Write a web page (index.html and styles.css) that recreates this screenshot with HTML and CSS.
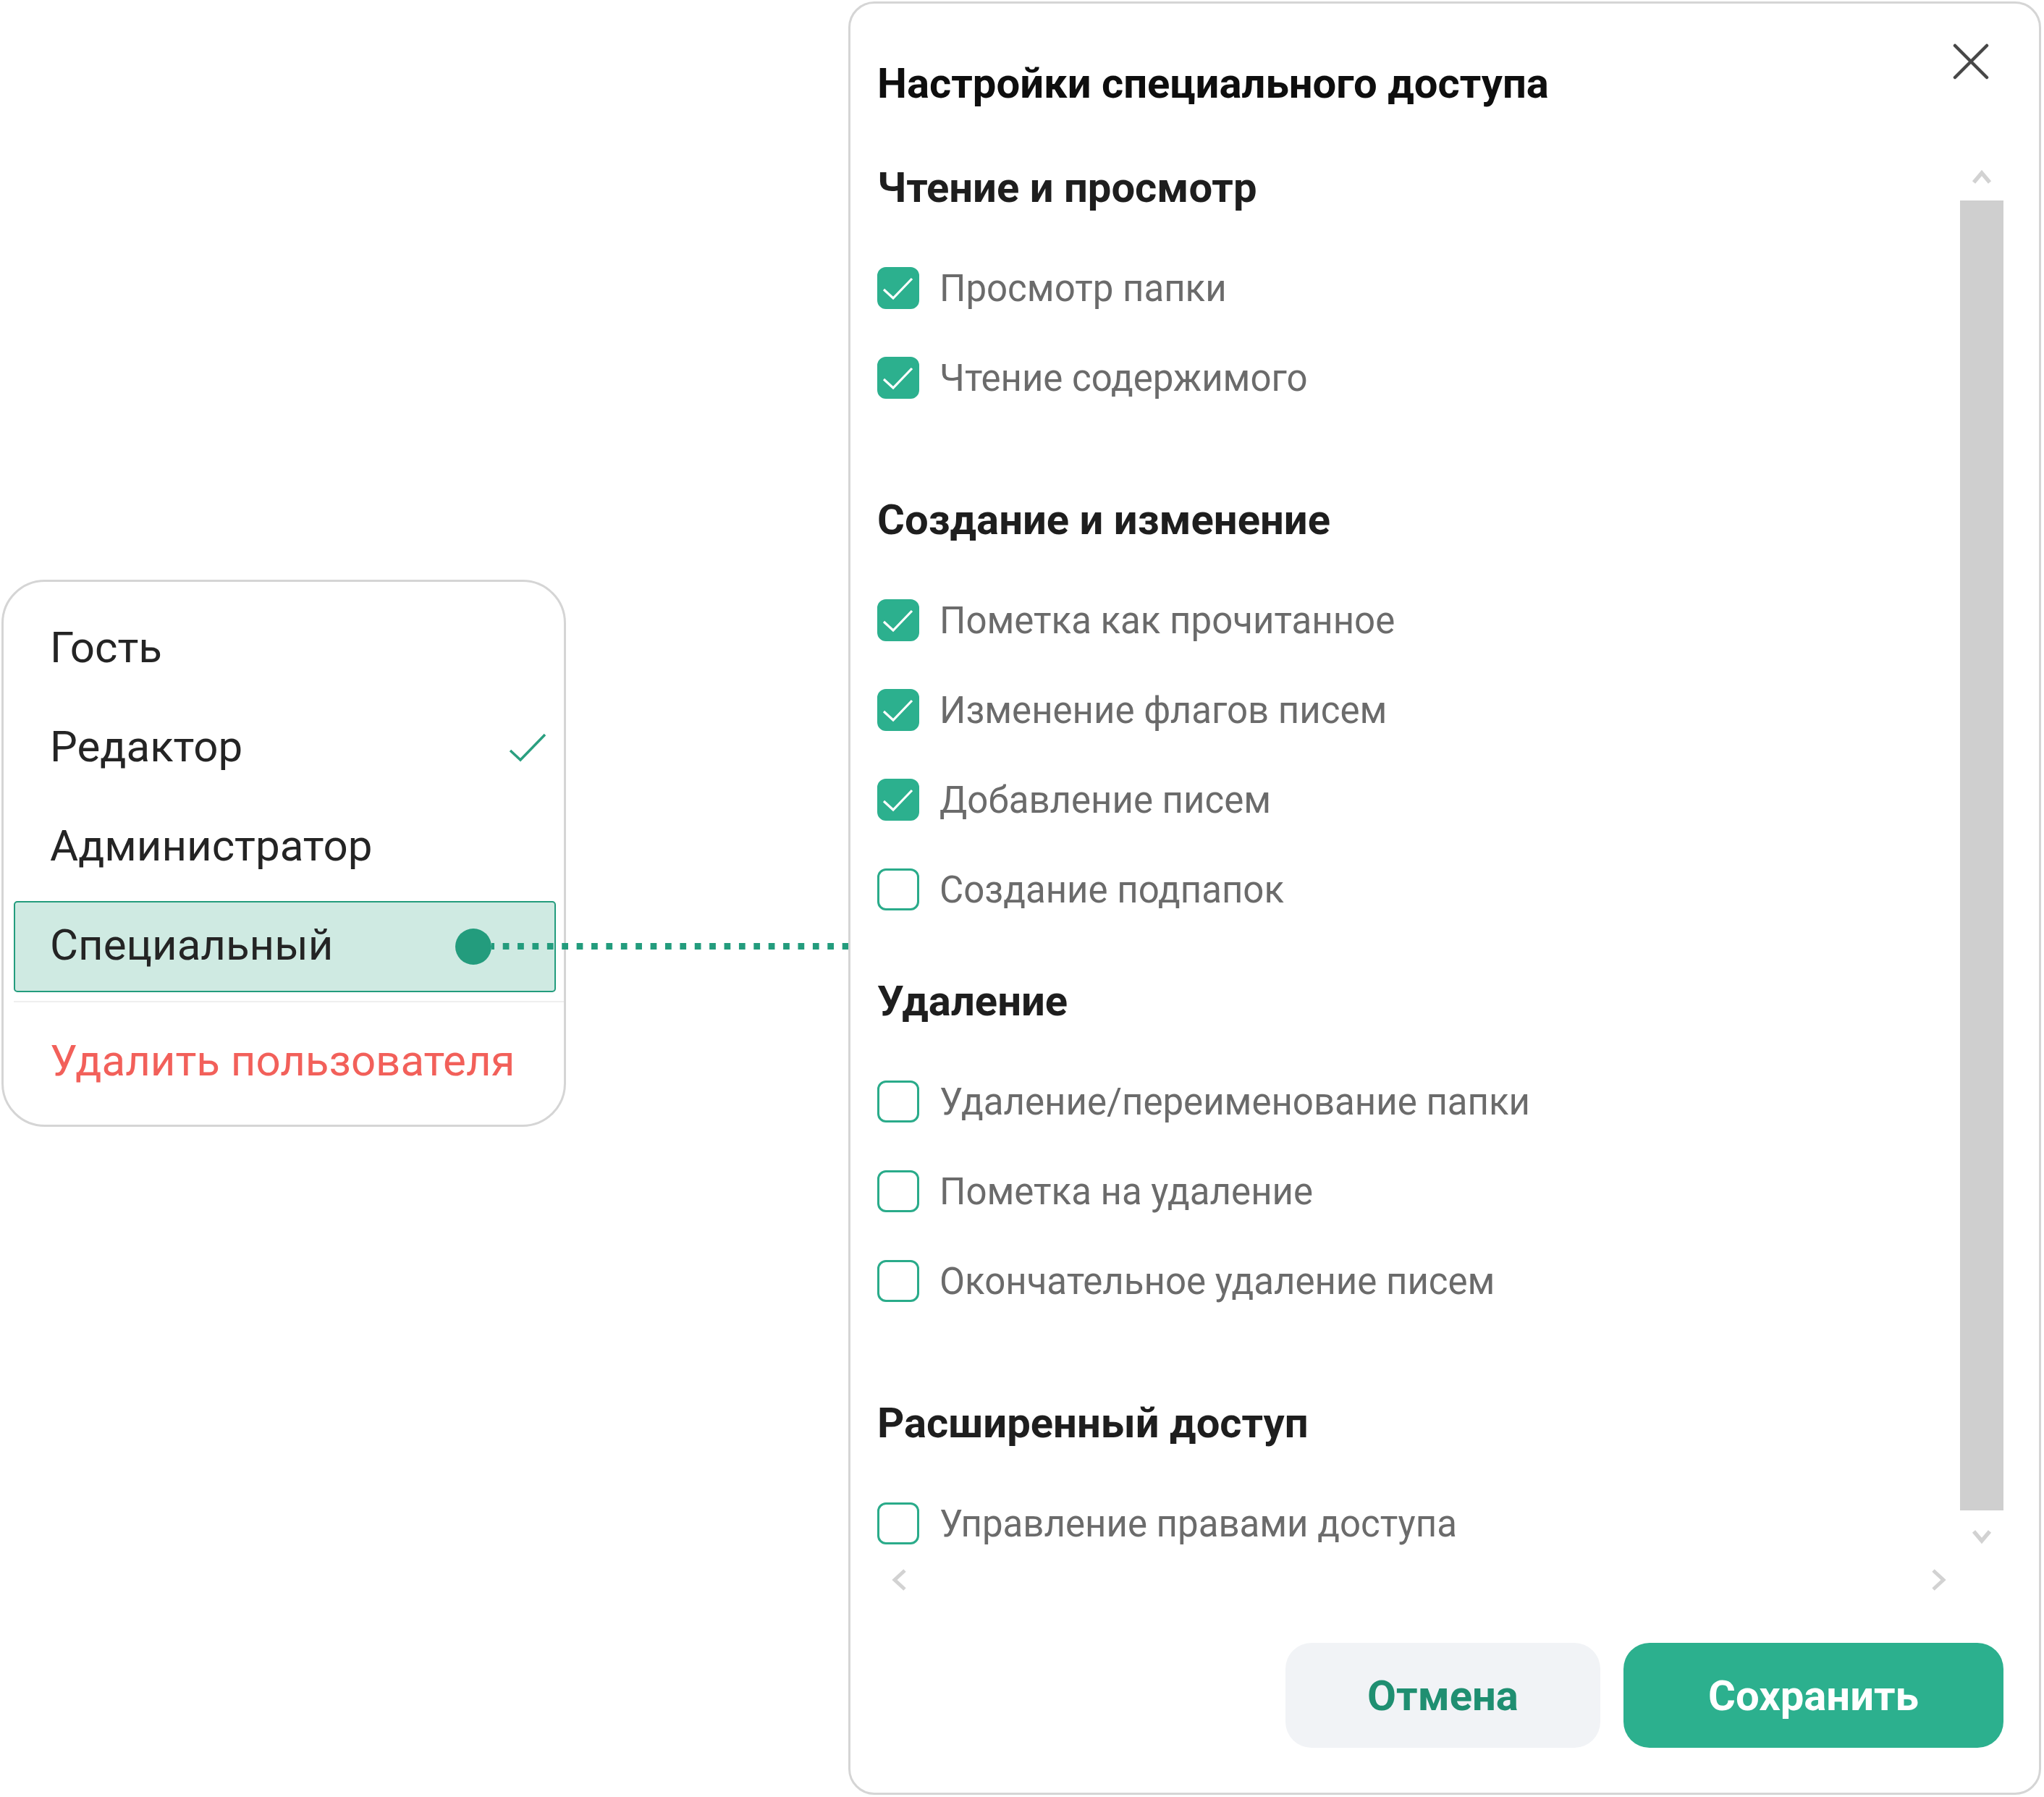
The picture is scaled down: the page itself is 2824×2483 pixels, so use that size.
FILE: index.html
```html
<!DOCTYPE html>
<html lang="ru">
<head>
  <meta charset="UTF-8">
  <title>Настройки специального доступа</title>
  <link rel="stylesheet" href="styles.css">
</head>
<body>

  <div class="stage">

    <div class="menu-col">
      <ul class="role-menu">
        <li class="role">Гость</li>
        <li class="role">Редактор
          <svg class="role-check" viewBox="0 0 52 40" width="52" height="40"><path d="M2 24 L16 37 L50 2" fill="none" stroke="#2a9f80" stroke-width="3.5"/></svg>
        </li>
        <li class="role">Администратор</li>
        <li class="role role-active">Специальный <span class="pin"></span></li>
        <li class="sep"></li>
        <li class="role role-danger">Удалить пользователя</li>
      </ul>
    </div>

    <div class="dialog">
      <div class="dialog-head">
        <h1>Настройки специального доступа</h1>
        <button class="close" title="Закрыть">
          <svg viewBox="0 0 50 50" width="50" height="50"><path d="M3 3 L47 47 M47 3 L3 47" stroke="#474747" stroke-width="4.5" stroke-linecap="round"/></svg>
        </button>
      </div>

      <div class="pane">
        <div class="pane-body">

          <section class="group">
            <h2>Чтение и просмотр</h2>
            <div class="opts">
              <label class="opt"><span class="box on"><svg viewBox="0 0 58 58"><path d="M9 31 L22 43 L48 16" fill="none" stroke="#fff" stroke-width="3.2"/></svg></span>Просмотр папки</label>
              <label class="opt"><span class="box on"><svg viewBox="0 0 58 58"><path d="M9 31 L22 43 L48 16" fill="none" stroke="#fff" stroke-width="3.2"/></svg></span>Чтение содержимого</label>
            </div>
          </section>

          <section class="group group-tight">
            <h2>Создание и изменение</h2>
            <div class="opts">
              <label class="opt"><span class="box on"><svg viewBox="0 0 58 58"><path d="M9 31 L22 43 L48 16" fill="none" stroke="#fff" stroke-width="3.2"/></svg></span>Пометка как прочитанное</label>
              <label class="opt"><span class="box on"><svg viewBox="0 0 58 58"><path d="M9 31 L22 43 L48 16" fill="none" stroke="#fff" stroke-width="3.2"/></svg></span>Изменение флагов писем</label>
              <label class="opt"><span class="box on"><svg viewBox="0 0 58 58"><path d="M9 31 L22 43 L48 16" fill="none" stroke="#fff" stroke-width="3.2"/></svg></span>Добавление писем</label>
              <label class="opt"><span class="box"></span>Создание подпапок</label>
            </div>
          </section>

          <section class="group">
            <h2>Удаление</h2>
            <div class="opts">
              <label class="opt"><span class="box"></span>Удаление/переименование папки</label>
              <label class="opt"><span class="box"></span>Пометка на удаление</label>
              <label class="opt"><span class="box"></span>Окончательное удаление писем</label>
            </div>
          </section>

          <section class="group">
            <h2>Расширенный доступ</h2>
            <div class="opts">
              <label class="opt"><span class="box"></span>Управление правами доступа</label>
            </div>
          </section>

        </div>

        <div class="vscroll">
          <div class="vs-up"><svg viewBox="0 0 30 23" width="30" height="23"><path d="M4 19 L15 6 L26 19" fill="none" stroke="#d2d2d2" stroke-width="5.5"/></svg></div>
          <div class="vs-thumb"></div>
          <div class="vs-down"><svg viewBox="0 0 30 23" width="30" height="23"><path d="M4 4 L15 17 L26 4" fill="none" stroke="#d2d2d2" stroke-width="5.5"/></svg></div>
        </div>

        <div class="hscroll">
          <svg viewBox="0 0 27 34" width="27" height="34"><path d="M21 4 L7 17 L21 30" fill="none" stroke="#d2d2d2" stroke-width="5"/></svg>
          <svg viewBox="0 0 27 34" width="27" height="34"><path d="M6 4 L20 17 L6 30" fill="none" stroke="#d2d2d2" stroke-width="5"/></svg>
        </div>
      </div>

      <div class="dialog-foot">
        <button class="btn btn-cancel">Отмена</button>
        <button class="btn btn-save">Сохранить</button>
      </div>
    </div>

  </div>

</body>
</html>
```

FILE: styles.css
```css
* {
  box-sizing: border-box;
}
body {
  margin: 0;
  background: #fff;
  font-family: Roboto, "Noto Sans", sans-serif;
  color: #222;
}
.stage {
  display: flex;
  align-items: flex-start;
  width: 2824px;
  height: 2483px;
}

/* role menu */
.menu-col {
  width: 1172px;
  flex-shrink: 0;
  padding: 801px 0 0 2px;
}
.role-menu {
  list-style: none;
  margin: 0;
  width: 780px;
  padding: 30px 11px 23px 14px;
  border: 3px solid #d5d5d5;
  border-radius: 60px;
  background: #fff;
}
.role {
  display: flex;
  align-items: center;
  justify-content: space-between;
  height: 126px;
  margin-bottom: 11px;
  padding: 0 11px 6px 48px;
  font-size: 60px;
  color: #242424;
  border: 2.5px solid transparent;
  border-radius: 5px;
}
.role-check {
  display: block;
  margin-top: 4px;
}
.role-active {
  background: #cfeae2;
  border-color: #239c7d;
  margin-bottom: 0;
  padding-right: 87px;
}
.pin {
  position: relative;
  width: 50px;
  height: 50px;
  margin-top: 6px;
  border-radius: 50%;
  background: #239c7d;
}
.pin::after {
  content: "";
  position: absolute;
  left: 100%;
  top: 20px;
  width: 493px;
  height: 9px;
  background-image: linear-gradient(to right, #239c7d 0 9px, transparent 9px);
  background-size: 20.4px 9px;
  background-position: 15.7px 0;
  background-repeat: repeat-x;
}
.sep {
  height: 2px;
  margin: 12px -11px 20px 0;
  background: #efefef;
}
.role-danger {
  color: #f2605a;
  margin-bottom: 0;
}

/* dialog */
.dialog {
  display: flex;
  flex-direction: column;
  width: 1648px;
  height: 2478px;
  margin-top: 2px;
  padding: 55px 49px 62px 37px;
  border: 3px solid #d5d5d5;
  border-radius: 36px;
  background: #fff;
}
.dialog-head {
  display: flex;
  justify-content: space-between;
  align-items: flex-start;
  margin-bottom: 82px;
}
.dialog-head h1 {
  margin: 21px 0 0;
  font-size: 58px;
  line-height: 68px;
  font-weight: 700;
  color: #0e0e0e;
}
.close {
  width: 50px;
  height: 50px;
  margin-right: 20px;
  padding: 0;
  border: none;
  background: none;
  cursor: pointer;
}
.close svg {
  display: block;
}

.pane {
  display: grid;
  grid-template-columns: 1fr 60px;
  grid-template-rows: 1909px 85px;
}
.group {
  margin-bottom: 139px;
}
.group-tight {
  margin-bottom: 97px;
}
.group:last-child {
  margin-bottom: 0;
}
.group h2 {
  margin: 0 0 82px;
  font-size: 58px;
  line-height: 56px;
  font-weight: 700;
  color: #1e1e1e;
}
.opts {
  display: flex;
  flex-direction: column;
  gap: 66px;
}
.opt {
  display: flex;
  align-items: center;
  height: 58px;
  font-size: 51px;
  color: #6b6b6b;
  cursor: pointer;
}
.box {
  width: 58px;
  height: 58px;
  flex-shrink: 0;
  margin-right: 28px;
  border: 3px solid #2aab8a;
  border-radius: 12px;
  background: #fff;
}
.box.on {
  background: #2cb08e;
  border-color: #2cb08e;
}
.box svg {
  display: block;
  width: 58px;
  height: 58px;
  margin: -3px;
}

.vscroll {
  display: flex;
  flex-direction: column;
}
.vs-up {
  height: 46px;
  padding-top: 2px;
  display: flex;
  justify-content: center;
  align-items: flex-start;
}
.vs-thumb {
  height: 1810px;
  background: #cfcfcf;
}
.vs-down {
  height: 53px;
  padding-top: 25px;
  display: flex;
  justify-content: center;
  align-items: flex-start;
}
.hscroll {
  display: flex;
  justify-content: space-between;
  align-items: center;
  padding: 0 16px 0 17px;
}
.hscroll svg {
  display: block;
}

.dialog-foot {
  display: flex;
  justify-content: flex-end;
  gap: 32px;
  margin-top: 45px;
}
.btn {
  height: 145px;
  border: none;
  border-radius: 36px;
  font-family: Roboto, "Noto Sans", sans-serif;
  font-size: 58px;
  font-weight: 700;
  cursor: pointer;
}
.btn-cancel {
  width: 435px;
  background: #f1f3f6;
  color: #1f8f71;
}
.btn-save {
  width: 525px;
  background: #2cb08e;
  color: #fff;
}
```
